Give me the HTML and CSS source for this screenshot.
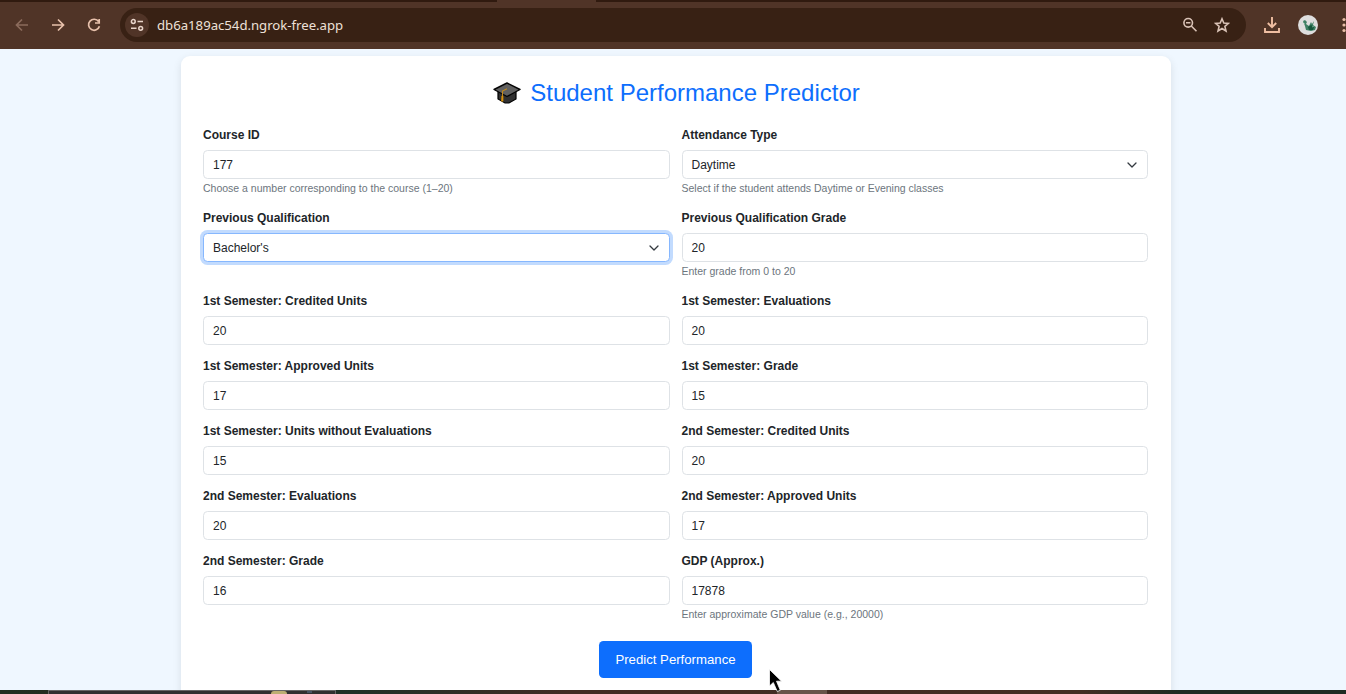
FILE: index.html
```
<!DOCTYPE html>
<html lang="en">
<head>
<meta charset="utf-8">
<title>Student Performance Predictor</title>
<link rel="stylesheet" href="styles.css">
</head>
<body>
<div class="screen">
  <header class="browser">
    <div class="tabstrip"><span class="active-tab"></span></div>
    <div class="toolbar">
      <svg class="nav dim" viewBox="0 0 16 16"><path d="M14 8H3M8 2.5L2.5 8L8 13.5"/></svg>
      <svg class="nav" viewBox="0 0 16 16"><path d="M2 8H13M8 2.5L13.500 8L8 13.500"/></svg>
      <svg class="nav" viewBox="0 0 16 16"><path d="M12.600 4.600A5.500 5.500 0 1 0 13.400 9.200M13.200 2V6H9"/></svg>
      <div class="omnibox">
        <span class="site"><svg viewBox="0 0 16 16"><circle cx="4.300" cy="4.500" r="1.900"/><path d="M8.500 4.500H14M2 11.300H7.500"/><circle cx="11.700" cy="11.300" r="1.900"/></svg></span>
        <span class="url">db6a189ac54d.ngrok-free.app</span>
        <svg class="zoomout" viewBox="0 0 16 16"><circle cx="6.200" cy="5.800" r="4.300"/><path d="M9.300 9L14.500 14.200M4 5.800H8.400"/></svg>
        <svg class="star" viewBox="0 0 16 16"><path d="M8 1.800L9.800 6L14.400 6.400L10.900 9.400L12 14L8 11.500L4 14L5.100 9.400L1.600 6.400L6.200 6Z"/></svg>
      </div>
      <svg class="download" viewBox="0 0 18 18"><path d="M9 1V11M4.800 7L9 11.200L13.200 7M2 12V16H16V12"/></svg>
      <svg class="avatar" viewBox="0 0 20 20"><circle cx="10" cy="10" r="10" fill="#dedede"/><path d="M5 6L7 5L9 7L8 9L11 11L13 7L14 9L16 6L15 10L18 12L17 15L13 16L8 15L7 11Z" fill="#3e8064"/><path d="M10 12L13 10L16 12L15 15L11 15Z" fill="#15573c"/><path d="M5 7L7 9M14 12L16 11" stroke="#71a98e"/></svg>
      <svg class="menu" viewBox="0 0 4 16"><circle cx="2" cy="2.500" r="1.600"/><circle cx="2" cy="8" r="1.600"/><circle cx="2" cy="13.500" r="1.600"/></svg>
    </div>
  </header>
  <main class="page">
    <section class="card">
      <h1 class="title">
        <svg class="cap" viewBox="0 0 28 22"><path d="M5 9V17L12 21H16L23 17V9" fill="#303030" stroke="#000" stroke-width="1.200"/><path d="M1 7.500L14 1L27 7.500L14 14.500Z" fill="#606060" stroke="#050505" stroke-width="1.400" stroke-linejoin="round"/><path d="M14 6.800L9.500 9V18" fill="none" stroke="#c48a1c" stroke-width="1.100"/><path d="M8.500 14H10.300V19.500H8.200Z" fill="#d9910a"/></svg>
        <span class="title-text">Student Performance Predictor</span>
      </h1>
      <form class="fields">
        <div class="field"><label class="label">Course ID</label><div class="control">177</div><small class="help">Choose a number corresponding to the course (1–20)</small></div>
        <div class="field"><label class="label">Attendance Type</label><div class="control">Daytime<svg class="chev" viewBox="0 0 12 12"><path d="M2 4L6 8L10 4"/></svg></div><small class="help">Select if the student attends Daytime or Evening classes</small></div>
        <div class="field"><label class="label">Previous Qualification</label><div class="control focus">Bachelor's<svg class="chev" viewBox="0 0 12 12"><path d="M2 4L6 8L10 4"/></svg></div></div>
        <div class="field"><label class="label">Previous Qualification Grade</label><div class="control">20</div><small class="help">Enter grade from 0 to 20</small></div>
        <div class="field"><label class="label">1st Semester: Credited Units</label><div class="control">20</div></div>
        <div class="field"><label class="label">1st Semester: Evaluations</label><div class="control">20</div></div>
        <div class="field"><label class="label">1st Semester: Approved Units</label><div class="control">17</div></div>
        <div class="field"><label class="label">1st Semester: Grade</label><div class="control">15</div></div>
        <div class="field"><label class="label">1st Semester: Units without Evaluations</label><div class="control">15</div></div>
        <div class="field"><label class="label">2nd Semester: Credited Units</label><div class="control">20</div></div>
        <div class="field"><label class="label">2nd Semester: Evaluations</label><div class="control">20</div></div>
        <div class="field"><label class="label">2nd Semester: Approved Units</label><div class="control">17</div></div>
        <div class="field"><label class="label">2nd Semester: Grade</label><div class="control">16</div></div>
        <div class="field"><label class="label">GDP (Approx.)</label><div class="control">17878</div><small class="help">Enter approximate GDP value (e.g., 20000)</small></div>
      </form>
      <button class="submit" type="button">Predict Performance</button>
    </section>
  </main>
  <footer class="desktop"><span class="window"><i class="disc"></i><i class="blue"></i></span><span class="light"></span></footer>
  <svg class="cursor" viewBox="0 0 14 24"><path d="M0.500 0.500V17L4.300 13.500L8.300 22.500L11.300 21.300L7.500 12.200H12.500Z"/></svg>
</div>
</body>
</html>
```

FILE: styles.css
```
* { box-sizing: border-box; }
body { margin: 0; font-family: "Liberation Sans", Arial, sans-serif; }
.screen { position: relative; width: 1346px; height: 694px; overflow: hidden; display: flex; flex-direction: column; }
.browser { flex: none; height: 49px; background: #503427; display: flex; flex-direction: column; }
.tabstrip { height: 2px; background: #301a0f; padding-left: 497px; }
.active-tab { display: block; width: 99px; height: 2px; background: #503427; }
.toolbar { height: 47px; display: flex; align-items: center; padding: 0 0 1px 14px; }
.toolbar svg { flex: none; }
.nav { width: 16px; height: 16px; margin-right: 20px; fill: none; stroke: #e8c1ac; stroke-width: 1.7; }
.dim { stroke: #8b6b5c; }
.omnibox { width: 1126px; height: 34px; margin-left: -2px; border-radius: 17px; background: #382114; display: flex; align-items: center; padding: 0 16px 0 5px; }
.site { width: 24px; height: 24px; border-radius: 50%; background: #503427; display: grid; place-items: center; }
.site svg { width: 16px; height: 16px; fill: none; stroke: #e9d5ca; stroke-width: 1.5; }
.url { font: 13.2px/20px "Noto Sans", "Open Sans", sans-serif; color: #eee0d8; margin: -1px 0 0 8px; flex: 1; letter-spacing: -.02px; }
.zoomout, .star { width: 16px; height: 16px; fill: none; stroke: #d9c2b6; stroke-width: 1.6; }
.star { margin-left: 16px; }
.download { width: 18px; height: 18px; margin-left: 17px; fill: none; stroke: #efbea2; stroke-width: 1.9; }
.avatar { width: 20px; height: 20px; margin-left: 17px; }
.menu { width: 4px; height: 16px; margin-left: 24px; fill: #e8bda7; }
.page { flex: 1; min-height: 0; padding: 7px 175px 0 181px; background: #eff7ff; overflow: hidden; }
.card { height: 720px; padding: 22px 23px 0 22px; border-radius: 9px; background: #fff; box-shadow: 0 3px 9px rgba(0, 0, 0, .1); display: flex; flex-direction: column; }
.title { height: 30px; margin: 0 0 18px; padding-left: 2px; display: flex; align-items: center; justify-content: center; gap: 9px; font-weight: 400; font-size: 24px; line-height: 30px; color: #0d6efd; white-space: nowrap; }
.cap { width: 28px; height: 22px; }
.fields { display: grid; grid-template-columns: 1fr 1fr; gap: 12px; }
.field { display: flex; flex-direction: column; min-width: 0; }
.label { font-size: 12px; line-height: 18px; font-weight: 700; color: #212529; margin-bottom: 6px; white-space: nowrap; }
.control { height: 29px; border: 1px solid #dee2e6; border-radius: 4.5px; padding: 0 9px; display: flex; align-items: center; justify-content: space-between; font-size: 12px; color: #212529; background: #fff; }
.focus { border-color: #86b7fe; box-shadow: 0 0 0 3px #c2dbfe; }
.chev { width: 12px; height: 12px; fill: none; stroke: #343a40; stroke-width: 1.3; stroke-linecap: round; stroke-linejoin: round; }
.help { margin: 2px 0 1px; font-size: 10.5px; line-height: 15px; color: #6c757d; white-space: nowrap; }
.submit { align-self: center; width: 153px; height: 37px; margin-top: 18px; padding: 0; border: 0; border-radius: 4.5px; background: #0d6efd; color: #fff; font: 13.2px/18px "Liberation Sans", Arial, sans-serif; }
.desktop { flex: none; height: 4px; display: flex; background: linear-gradient(90deg, #232d20 0, #203027 360px, #422b24 570px, #432d24 1080px, #1d2b22 1180px, #1d2b22 100%); }
.window { width: 288px; height: 4px; margin-left: 48px; border: 1px solid #666; border-bottom: 0; background: #303030; display: flex; }
.disc { width: 16px; height: 3px; margin-left: 222px; border-radius: 8px 8px 0 0; background: #bcae72; }
.blue { width: 5px; height: 2px; margin-left: 20px; background: #465363; }
.light { width: 50px; height: 4px; margin-left: 441px; background: #685349; }
.cursor { position: absolute; left: 769px; top: 669px; width: 14px; height: 24px; fill: #000; stroke: #fff; stroke-width: .8; }
```
